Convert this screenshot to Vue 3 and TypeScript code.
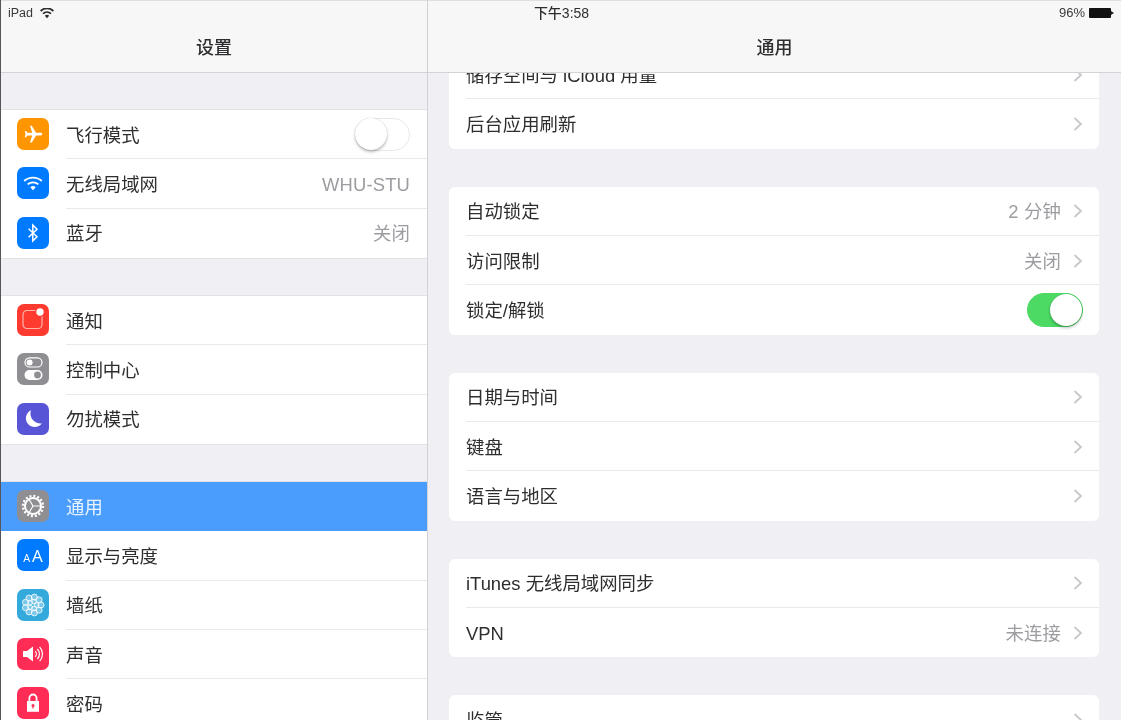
<template>
  <div class="ipad">
    <!-- status bar lies over both nav bars -->
    <div class="status">
      <div class="status-left">
        <span>iPad</span>
        <svg class="status-wifi" width="14" height="11" viewBox="0 0 15 11">
          <path d="M7.5 10.5 5.2 7.8a3.4 3.4 0 0 1 4.6 0zM3.9 6.4 2.6 4.9a7.2 7.2 0 0 1 9.8 0l-1.3 1.5a5.3 5.3 0 0 0-7.2 0zM1.3 3.5 0 2a11 11 0 0 1 15 0l-1.3 1.5a9.1 9.1 0 0 0-12.4 0z" fill="#2b2b2b" />
        </svg>
      </div>
      <div class="status-time">下午3:58</div>
      <div class="status-right">
        <span>96%</span>
        <span class="battery"></span>
      </div>
    </div>

    <aside class="pane pane-left">
      <header class="nav">设置</header>
      <div class="scroll">
        <section v-for="(group, i) in sidebar" :key="i" class="side-group">
          <div v-for="row in group" :key="row.label" class="side-row" :class="{ active: row.active }">
            <span class="icon" :style="{ background: row.color }">
              <svg v-if="row.icon === 'plane'" width="21" height="21" viewBox="0 0 24 24">
                <path transform="rotate(90 12 12)" d="M21 16v-2l-8-5V3.5c0-.83-.67-1.5-1.5-1.5S10 2.67 10 3.5V9l-8 5v2l8-2.5V19l-2 1.5V22l3.5-1 3.5 1v-1.5L13 19v-5.5l8 2.5z" fill="#fff" />
              </svg>
              <svg v-else-if="row.icon === 'wifi'" width="24" height="24" viewBox="0 0 24 24" fill="none" stroke="#fff" stroke-width="1.8">
                <path d="M3.2 10a13 13 0 0 1 17.6 0" />
                <path d="M6.6 13.4a8.2 8.2 0 0 1 10.8 0" />
                <path d="M12 19.2 9.3 16.3a4 4 0 0 1 5.4 0z" fill="#fff" stroke="none" />
              </svg>
              <svg v-else-if="row.icon === 'bluetooth'" width="24" height="24" viewBox="0 0 24 24" fill="none" stroke="#fff" stroke-width="1.5">
                <path d="M7.6 7.8 16 15.8 11.8 20V4L16 8.2 7.6 16.2" />
              </svg>
              <svg v-else-if="row.icon === 'notify'" width="32" height="32" viewBox="0 0 32 32" fill="none">
                <rect x="6" y="6.5" width="19" height="18" rx="4" stroke="#ffb3ac" stroke-width="1.2" />
                <circle cx="23" cy="8" r="5" fill="#ff3b30" />
                <circle cx="23" cy="8" r="3.7" fill="#fff" />
              </svg>
              <svg v-else-if="row.icon === 'control'" width="32" height="32" viewBox="0 0 32 32" fill="none">
                <rect x="8" y="4.8" width="17" height="9.2" rx="4.6" stroke="#fff" stroke-width="1.2" />
                <circle cx="12.6" cy="9.4" r="3" fill="#fff" />
                <rect x="7.5" y="17" width="18" height="10" rx="5" fill="#fff" />
                <circle cx="20.5" cy="22" r="3.4" fill="#8e8e93" />
              </svg>
              <svg v-else-if="row.icon === 'moon'" width="32" height="32" viewBox="0 0 32 32">
                <path d="M14 7.2A8.8 8.8 0 1 0 24.8 20.4 10 10 0 0 1 14 7.2z" fill="#fff" />
              </svg>
              <svg v-else-if="row.icon === 'gear'" width="32" height="32" viewBox="0 0 32 32" fill="none" stroke="#fff">
                <circle cx="16" cy="16" r="10" stroke-width="2.4" stroke-dasharray="2 1.93" />
                <circle cx="16" cy="16" r="8" stroke-width="2" />
                <path d="M16 16H24M16 16 12 9.2M16 16 12 22.8" stroke-width="1.2" />
              </svg>
              <span v-else-if="row.icon === 'text'" class="icon-aa"><small>A</small>A</span>
              <svg v-else-if="row.icon === 'flower'" width="32" height="32" viewBox="0 0 32 32" fill="#fff" fill-opacity=".35" stroke="#fff" stroke-width=".8">
                <circle v-for="(c, n) in petals" :key="n" :cx="c.x" :cy="c.y" :r="c.r" />
              </svg>
              <svg v-else-if="row.icon === 'sound'" width="32" height="32" viewBox="0 0 32 32" fill="none" stroke="#fff" stroke-width="1.2">
                <path d="M6 13h4l6-4.6v15.2L10 19H6z" fill="#fff" stroke="none" />
                <path d="M18.2 13.2a4 4 0 0 1 0 5.6" />
                <path d="M20.4 11a7.2 7.2 0 0 1 0 10" />
                <path d="M22.6 8.8a10.4 10.4 0 0 1 0 14.4" />
              </svg>
              <svg v-else-if="row.icon === 'lock'" width="32" height="32" viewBox="0 0 32 32" fill="none">
                <path d="M12.4 14.5v-3.4a3.6 3.6 0 0 1 7.2 0v3.4" stroke="#fff" stroke-width="1.8" />
                <path d="M10 14h12v10.8H10z" fill="#fff" />
                <circle cx="16" cy="18.4" r="1.5" fill="#ff2d55" />
                <path d="M15.4 18.4h1.2v3.2h-1.2z" fill="#ff2d55" />
              </svg>
            </span>
            <div class="side-body">
              <span class="label">{{ row.label }}</span>
              <span v-if="row.value" class="value">{{ row.value }}</span>
              <span v-if="row.toggle" class="toggle"></span>
            </div>
          </div>
        </section>
      </div>
    </aside>

    <main class="pane pane-right">
      <header class="nav">通用</header>
      <div class="scroll">
        <div class="cards">
          <section v-for="(group, i) in general" :key="i" class="card">
            <div v-for="row in group" :key="row.label" class="card-row">
              <span class="label">{{ row.label }}</span>
              <span v-if="row.value" class="value">{{ row.value }}</span>
              <span v-if="row.toggle" class="toggle on"></span>
              <svg v-else class="chevron" width="10" height="14" viewBox="0 0 10 14" fill="none" stroke="#c7c7cc" stroke-width="1.8">
                <path d="M1.5 1 8 7 1.5 13" />
              </svg>
            </div>
          </section>
        </div>
      </div>
    </main>
  </div>
</template>

<script setup lang="ts">
interface SideRow {
  label: string;
  icon: string;
  color: string;
  value?: string;
  toggle?: boolean;
  active?: boolean;
}

interface CardRow {
  label: string;
  value?: string;
  toggle?: boolean;
}

const sidebar: SideRow[][] = [
  [
    { label: '飞行模式', icon: 'plane', color: '#ff9500', toggle: true },
    { label: '无线局域网', icon: 'wifi', color: '#007aff', value: 'WHU-STU' },
    { label: '蓝牙', icon: 'bluetooth', color: '#007aff', value: '关闭' }
  ],
  [
    { label: '通知', icon: 'notify', color: '#ff3b30' },
    { label: '控制中心', icon: 'control', color: '#8e8e93' },
    { label: '勿扰模式', icon: 'moon', color: '#5856d6' }
  ],
  [
    { label: '通用', icon: 'gear', color: '#8e8e93', active: true },
    { label: '显示与亮度', icon: 'text', color: '#007aff' },
    { label: '墙纸', icon: 'flower', color: '#34aadc' },
    { label: '声音', icon: 'sound', color: '#ff2d55' },
    { label: '密码', icon: 'lock', color: '#ff2d55' }
  ]
];

const general: CardRow[][] = [
  [{ label: '储存空间与 iCloud 用量' }, { label: '后台应用刷新' }],
  [
    { label: '自动锁定', value: '2 分钟' },
    { label: '访问限制', value: '关闭' },
    { label: '锁定/解锁', toggle: true }
  ],
  [{ label: '日期与时间' }, { label: '键盘' }, { label: '语言与地区' }],
  [{ label: 'iTunes 无线局域网同步' }, { label: 'VPN', value: '未连接' }],
  [{ label: '监管' }]
];

// wallpaper icon: two rings of small circles round the middle
function ring(count: number, radius: number, r: number) {
  return Array.from({ length: count }, (_, i) => {
    const a = (i / count) * Math.PI * 2;
    return { x: 16 + Math.cos(a) * radius, y: 16 + Math.sin(a) * radius, r };
  });
}

const petals = [...ring(9, 8, 3), ...ring(5, 3.6, 2.4)];
</script>

<style>
html,
body {
  margin: 0;
  background: #efeff4;
}
</style>

<style scoped>
.ipad {
  position: relative;
  display: grid;
  grid-template-columns: 427px 1fr;
  height: 720px;
  overflow: hidden;
  box-sizing: border-box;
  border-left: 1px solid #55555a;
  background: #efeff4;
  color: #2e2e30;
  font-family: 'Liberation Sans', 'Noto Sans CJK SC', sans-serif;
  font-size: 18.4px;
  filter: blur(0.45px);
}

/* Status bar */
.status {
  position: absolute;
  top: 1px;
  left: 0;
  right: 0;
  z-index: 2;
  display: grid;
  grid-template-columns: 1fr auto 1fr;
  align-items: center;
  height: 24px;
  padding: 0 8px 0 7px;
  font-size: 12.5px;
  line-height: 24px;
  color: #3a3a3c;
}

.status-left {
  display: flex;
  align-items: center;
  gap: 7px;
}

.status-time {
  display: flex;
  align-items: center;
  height: 24px;
  margin-left: 2px;
  font-size: 14px;
  font-weight: 500;
  color: #2e2e30;
}

.status-right {
  display: flex;
  align-items: center;
  justify-content: flex-end;
  gap: 4px;
  font-size: 13px;
}

.battery {
  position: relative;
  display: block;
  width: 22px;
  height: 10px;
  margin-right: 2px;
  background: #111;
  border-radius: 1px;
}

.battery::after {
  content: '';
  position: absolute;
  top: 3px;
  right: -3px;
  border-left: 3px solid #222;
  border-top: 2px solid transparent;
  border-bottom: 2px solid transparent;
}

/* Panes */
.pane {
  display: flex;
  flex-direction: column;
  min-width: 0;
  height: 720px;
}

.pane-left {
  box-sizing: border-box;
  border-right: 1px solid #d2d2d6;
}

.nav {
  position: relative;
  z-index: 1;
  flex: none;
  box-sizing: border-box;
  height: 73px;
  padding-top: 35px;
  background: #f7f7f8;
  border-top: 1px solid #dfdfe1;
  border-bottom: 1px solid #d4d4d7;
  font-size: 18px;
  font-weight: 500;
  line-height: 24px;
  text-align: center;
}

.scroll {
  flex: 1;
  min-height: 0;
  overflow: hidden;
}

/* Left list */
.side-group {
  margin-top: 38px;
  background: #fff;
  box-shadow: 0 0 0 1px #e2e2e5;
}

.side-group:first-child {
  margin-top: 37px;
}

.side-row {
  display: flex;
  align-items: center;
  height: 49.33px;
  padding-left: 16px;
  box-sizing: border-box;
}

.side-row.active {
  background: #4a9dfd;
  color: #e9f3ff;
}

.icon {
  flex: none;
  display: flex;
  align-items: center;
  justify-content: center;
  width: 32px;
  height: 32px;
  margin-bottom: 1px;
  border-radius: 7px;
}

.icon-aa {
  display: flex;
  align-items: baseline;
  gap: 2px;
  color: #fff;
  font-family: 'Open Sans', 'Liberation Sans', sans-serif;
  font-size: 17px;
  line-height: 1;
}

.icon-aa small {
  font-size: 11px;
}

.side-body {
  flex: 1;
  display: flex;
  align-items: center;
  justify-content: space-between;
  align-self: stretch;
  min-width: 0;
  margin-left: 17px;
  padding-right: 17px;
  border-bottom: 1px solid #e9e9eb;
}

.side-row:last-child .side-body,
.side-row.active .side-body {
  border-bottom-color: transparent;
}

.label {
  padding-top: 3px;
  line-height: 24px;
}

.value {
  padding-top: 3px;
  color: #9c9ca1;
  line-height: 24px;
  letter-spacing: 0.15px;
}

/* Toggles */
.toggle {
  position: relative;
  flex: none;
  box-sizing: border-box;
  width: 55px;
  height: 33px;
  background: #fff;
  border: 1px solid #e8e8ea;
  border-radius: 17px;
}

.toggle::after {
  content: '';
  position: absolute;
  top: -1px;
  left: -1px;
  width: 32px;
  height: 32px;
  background: #fff;
  border-radius: 50%;
  box-shadow: 0 2px 3px rgba(0, 0, 0, 0.25), 0 0 1px rgba(0, 0, 0, 0.25);
}

.toggle.on {
  width: 56px;
  height: 34px;
  background: #4cd964;
  border-color: #4cd964;
}

.toggle.on::after {
  top: 0;
  left: auto;
  right: 0;
  width: 32px;
  height: 32px;
}

/* Right cards */
.cards {
  display: flex;
  flex-direction: column;
  gap: 38px;
  margin-top: -23px;
  padding: 0 22px 0 21px;
}

.card {
  flex: none;
  background: #fff;
  border-radius: 6px;
}

.card-row {
  display: flex;
  align-items: center;
  box-sizing: border-box;
  height: 49.33px;
  margin-left: 17px;
  padding-right: 16px;
  border-bottom: 1px solid #e9e9eb;
}

.card-row:last-child {
  border-bottom: none;
}

.card-row .label {
  flex: 1;
}

.chevron {
  flex: none;
  margin-top: 1px;
  margin-left: 12px;
}
</style>
